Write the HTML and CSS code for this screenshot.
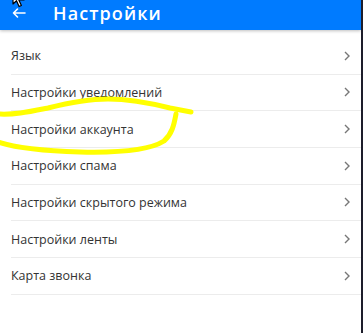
FILE: index.html
```html
<!DOCTYPE html>
<html lang="ru">
<head>
<meta charset="utf-8">
<link rel="stylesheet" href="styles.css">
</head>
<body>
<div class="screen">
  <header class="appbar">
    <svg class="back" width="16" height="12" viewBox="0 0 16 12"><path d="M14 6H2.5M6.5 2L2.5 6l4 4" fill="none" stroke="#fff" stroke-width="1.6" stroke-linecap="round" stroke-linejoin="round"/></svg>
    <h1 class="title">Настройки</h1>
    <svg class="cursor" width="14" height="20" viewBox="0 0 14 20"><path d="M1 1v14l3.5-3.3 2.6 5.8 2.3-1-2.6-5.6H12z" fill="#fff" stroke="#000" stroke-width="1.2" stroke-linejoin="round"/></svg>
  </header>
  <ul class="list">
    <li class="row"><span>Язык</span><svg class="chev" width="6" height="10" viewBox="0 0 6 10"><path d="M1 1l4 4-4 4" fill="none" stroke="#777" stroke-width="1.4"/></svg></li>
    <li class="row"><span>Настройки уведомлений</span><svg class="chev" width="6" height="10" viewBox="0 0 6 10"><path d="M1 1l4 4-4 4" fill="none" stroke="#777" stroke-width="1.4"/></svg></li>
    <li class="row"><span>Настройки аккаунта</span><svg class="chev" width="6" height="10" viewBox="0 0 6 10"><path d="M1 1l4 4-4 4" fill="none" stroke="#777" stroke-width="1.4"/></svg></li>
    <li class="row"><span>Настройки спама</span><svg class="chev" width="6" height="10" viewBox="0 0 6 10"><path d="M1 1l4 4-4 4" fill="none" stroke="#777" stroke-width="1.4"/></svg></li>
    <li class="row"><span>Настройки скрытого режима</span><svg class="chev" width="6" height="10" viewBox="0 0 6 10"><path d="M1 1l4 4-4 4" fill="none" stroke="#777" stroke-width="1.4"/></svg></li>
    <li class="row"><span>Настройки ленты</span><svg class="chev" width="6" height="10" viewBox="0 0 6 10"><path d="M1 1l4 4-4 4" fill="none" stroke="#777" stroke-width="1.4"/></svg></li>
    <li class="row"><span>Карта звонка</span><svg class="chev" width="6" height="10" viewBox="0 0 6 10"><path d="M1 1l4 4-4 4" fill="none" stroke="#777" stroke-width="1.4"/></svg></li>
  </ul>
  <svg class="scribble" width="200" height="160" viewBox="0 0 200 160">
    <path d="M-2 114C14 115 28 112 48 108C68 103 88 99 108 99C130 99 150 103 170 108L191 112" fill="none" stroke="#ffff00" stroke-width="5" stroke-linecap="round" stroke-linejoin="round"/>
    <path d="M176 114C174 125 172 134 164 141C150 150 120 153 80 152C45 151 15 148 -2 142" fill="none" stroke="#ffff00" stroke-width="5" stroke-linecap="round" stroke-linejoin="round"/>
  </svg>
</div>
</body>
</html>
```
FILE: styles.css
```css
html, body {
  margin: 0;
  padding: 0;
  background: #fff;
}
.screen {
  position: relative;
  width: 361px;
  height: 333px;
  border-right: 2px solid #1d1d2b;
  background: #fff;
  overflow: hidden;
  font-family: "Open Sans", "Noto Sans", sans-serif;
}
.appbar {
  position: relative;
  box-sizing: border-box;
  height: 30px;
  padding-bottom: 5px;
  background: #007bff;
  display: flex;
  align-items: center;
  box-shadow: 0 1px 3px rgba(0,0,0,0.25);
}
.back {
  margin-left: 11px;
  flex: none;
}
.title {
  margin: 0 0 0 26px;
  color: #fff;
  font-size: 18px;
  font-weight: 600;
  letter-spacing: 1.1px;
  line-height: 1;
}
.cursor {
  position: absolute;
  left: 12px;
  top: -11px;
}
.list {
  list-style: none;
  margin: 0;
  padding: 8px 0 0 11px;
}
.row {
  box-sizing: border-box;
  height: 36.67px;
  border-bottom: 1px solid #ececec;
  display: flex;
  align-items: center;
  justify-content: space-between;
  padding-right: 11px;
  font-size: 12.5px;
  color: #333;
}
.chev {
  flex: none;
}
.scribble {
  position: absolute;
  left: 0;
  top: 0;
  pointer-events: none;
}
```
